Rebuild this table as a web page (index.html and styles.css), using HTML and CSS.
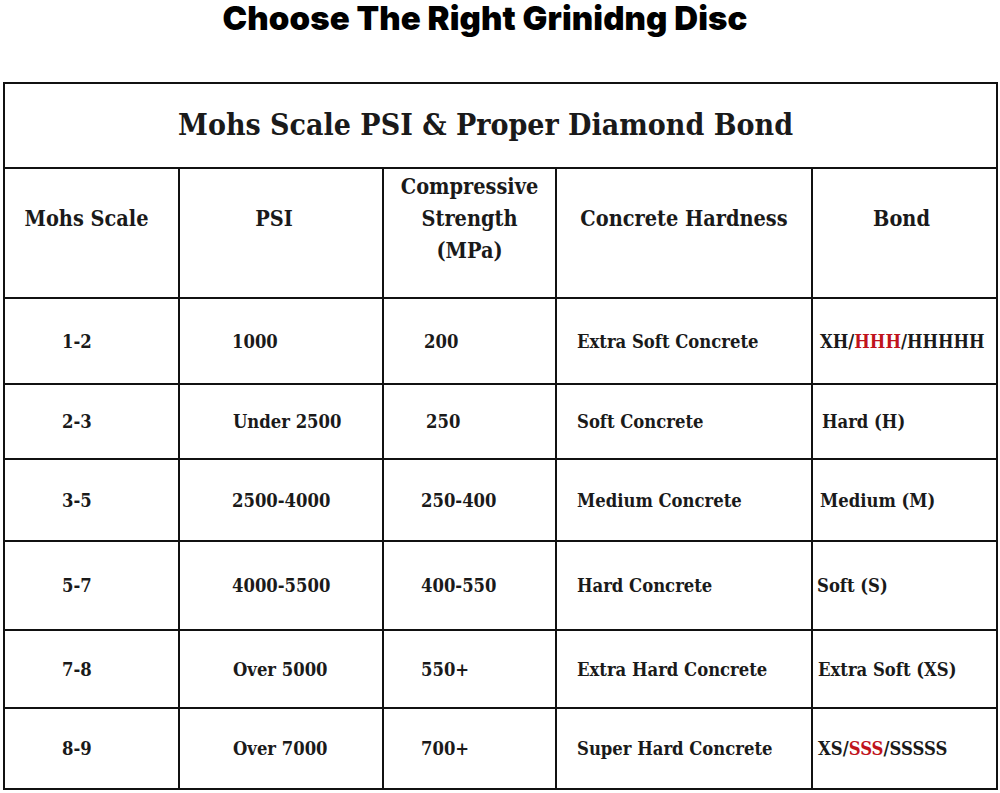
FILE: index.html
```html
<!DOCTYPE html>
<html lang="en">
<head>
<meta charset="utf-8">
<title>Choose The Right Grinidng Disc</title>
<link rel="stylesheet" href="styles.css">
</head>
<body>
<h1 class="page-title">Choose The Right Grinidng Disc</h1>
<table class="bond-table">
  <colgroup>
    <col class="c1"><col class="c2"><col class="c3"><col class="c4"><col class="c5">
  </colgroup>
  <thead>
    <tr class="r-caption"><th colspan="5" class="caption">Mohs Scale PSI &amp; Proper Diamond Bond</th></tr>
    <tr class="r-head">
      <th class="h1">Mohs Scale</th>
      <th class="h2">PSI</th>
      <th>Compressive<br>Strength<br>(MPa)</th>
      <th>Concrete Hardness</th>
      <th class="h5">Bond</th>
    </tr>
  </thead>
  <tbody>
    <tr class="r1">
      <td class="d1">1-2</td><td class="d2">1000</td><td class="d3 s3">200</td><td class="d4">Extra Soft Concrete</td>
      <td class="d5">XH/<span class="red">HHH</span>/HHHHH</td>
    </tr>
    <tr class="r2">
      <td class="d1">2-3</td><td class="d2 s2">Under 2500</td><td class="d3 s3b">250</td><td class="d4">Soft Concrete</td>
      <td class="d5 s5">Hard (H)</td>
    </tr>
    <tr class="r3">
      <td class="d1">3-5</td><td class="d2">2500-4000</td><td class="d3">250-400</td><td class="d4">Medium Concrete</td>
      <td class="d5">Medium (M)</td>
    </tr>
    <tr class="r4">
      <td class="d1">5-7</td><td class="d2">4000-5500</td><td class="d3">400-550</td><td class="d4">Hard Concrete</td>
      <td class="d5 s5l">Soft (S)</td>
    </tr>
    <tr class="r5">
      <td class="d1">7-8</td><td class="d2 s2">Over 5000</td><td class="d3">550+</td><td class="d4">Extra Hard Concrete</td>
      <td class="d5 s5m">Extra Soft (XS)</td>
    </tr>
    <tr class="r6">
      <td class="d1">8-9</td><td class="d2 s2">Over 7000</td><td class="d3">700+</td><td class="d4">Super Hard Concrete</td>
      <td class="d5 s5m">XS/<span class="red">SSS</span>/SSSSS</td>
    </tr>
  </tbody>
</table>
</body>
</html>
```

FILE: styles.css
```css
html, body {
  margin: 0;
  padding: 0;
  background: #ffffff;
}

body {
  width: 1000px;
  height: 793px;
  overflow: hidden;
}

.page-title {
  margin: 0;
  height: 82px;
  padding: 0 30px 0 0;
  box-sizing: border-box;
  text-align: center;
  font-family: Inter, Lato, sans-serif;
  font-weight: 900;
  font-size: 33px;
  line-height: 36px;
  color: #000000;
  letter-spacing: 0.1px;
}

.bond-table {
  margin-left: 3px;
  width: 993px;
  table-layout: fixed;
  border-collapse: collapse;
  font-family: "DejaVu Serif Condensed", "DejaVu Serif", serif;
  font-weight: bold;
  color: #1a1a1a;
}

.c1 { width: 175px; }
.c2 { width: 204px; }
.c3 { width: 173px; }
.c4 { width: 256px; }
.c5 { width: 185px; }

.bond-table th,
.bond-table td {
  border: 2px solid #111111;
  padding: 0;
}

.caption {
  height: 80px;
  font-size: 30px;
  padding: 0 30px 3px 0 !important;
  text-align: center;
  vertical-align: middle;
  font-weight: bold;
}

.r-head th {
  height: 100px;
  font-size: 21.5px;
  line-height: 32px;
  font-weight: bold;
  text-align: center;
  vertical-align: middle;
  padding-bottom: 28px;
}

.r-head .h1 { padding-right: 10px; }
.r-head .h2 { padding-right: 14px; }
.r-head .h5 { padding-right: 6px; }

.bond-table td {
  font-size: 18.3px;
  vertical-align: middle;
  text-align: left;
  white-space: nowrap;
}

.r1 td { height: 84px; }
.r2 td { height: 73px; }
.r3 td { height: 80px; }
.r4 td { height: 87px; }
.r5 td { height: 76px; }
.r6 td { height: 79px; }

.d1 { padding-left: 57px !important; }
.d2 { padding-left: 52px !important; }
.d3 { padding-left: 37px !important; }
.d4 { padding-left: 20px !important; }
.d5 { padding-left: 7px !important; }

.s2 { padding-left: 53px !important; }
.s3 { padding-left: 40px !important; }
.s3b { padding-left: 42px !important; }
.s5 { padding-left: 9px !important; }
.s5l { padding-left: 4px !important; }
.s5m { padding-left: 5px !important; }

.red {
  color: #c0141c;
}
```
